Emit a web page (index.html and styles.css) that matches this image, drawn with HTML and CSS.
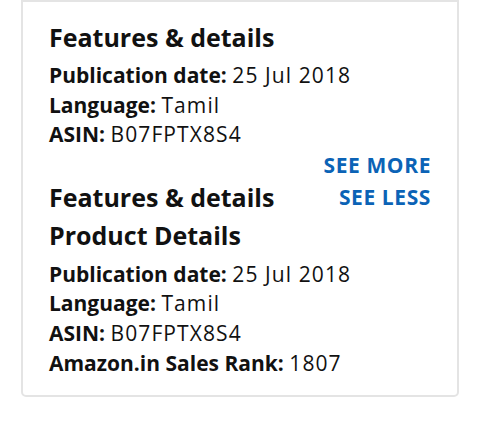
FILE: index.html
```html
<!DOCTYPE html>
<html>
<head>
<meta charset="utf-8">
<link rel="stylesheet" href="styles.css">
</head>
<body>
<div class="card">
  <section class="sec">
    <h2 class="title first">Features &amp; details</h2>
    <ul class="facts">
      <li><b>Publication date:</b> <span class="val">25 Jul 2018</span></li>
      <li><b>Language:</b> <span class="val">Tamil</span></li>
      <li><b>ASIN:</b> <span class="val">B07FPTX8S4</span></li>
    </ul>
    <div class="more-row"><a class="link" href="#">SEE MORE</a></div>
  </section>
  <section class="sec">
    <div class="head-row">
      <h2 class="title">Features &amp; details</h2>
      <a class="link" href="#">SEE LESS</a>
    </div>
    <h2 class="title sub">Product Details</h2>
    <ul class="facts">
      <li><b>Publication date:</b> <span class="val">25 Jul 2018</span></li>
      <li><b>Language:</b> <span class="val">Tamil</span></li>
      <li><b>ASIN:</b> <span class="val">B07FPTX8S4</span></li>
      <li><b>Amazon.in Sales Rank:</b> <span class="val">1807</span></li>
    </ul>
  </section>
</div>
</body>
</html>
```
FILE: styles.css
```css
html, body {
  margin: 0;
  padding: 0;
  background: #ffffff;
}
body {
  font-family: "Open Sans", "Noto Sans", sans-serif;
  color: #111111;
}
.card {
  margin: 0 21px 0 21px;
  width: 438px;
  box-sizing: border-box;
  border: 2px solid #e4e4e4;
  border-radius: 0 0 5px 5px;
  padding: 16px 26px 17px 26px;
}
.title {
  margin: 0;
  font-size: 25px;
  font-weight: 700;
  line-height: 38px;
}
.first {
  margin-bottom: 5px;
}
.facts {
  list-style: none;
  margin: 0;
  padding: 0;
  font-size: 21px;
  line-height: 29.6px;
}
.facts b {
  font-weight: 700;
}
.val {
  letter-spacing: 1.1px;
}
.more-row {
  display: flex;
  justify-content: flex-end;
  line-height: 26px;
  margin-top: 2px;
}
.head-row {
  display: flex;
  justify-content: space-between;
  align-items: center;
}
.link {
  color: #0b63b6;
  font-weight: 700;
  font-size: 21px;
  text-decoration: none;
  letter-spacing: 0.6px;
}
.sub {
  line-height: 38px;
}
.sub + .facts {
  margin-top: 6px;
}
```
